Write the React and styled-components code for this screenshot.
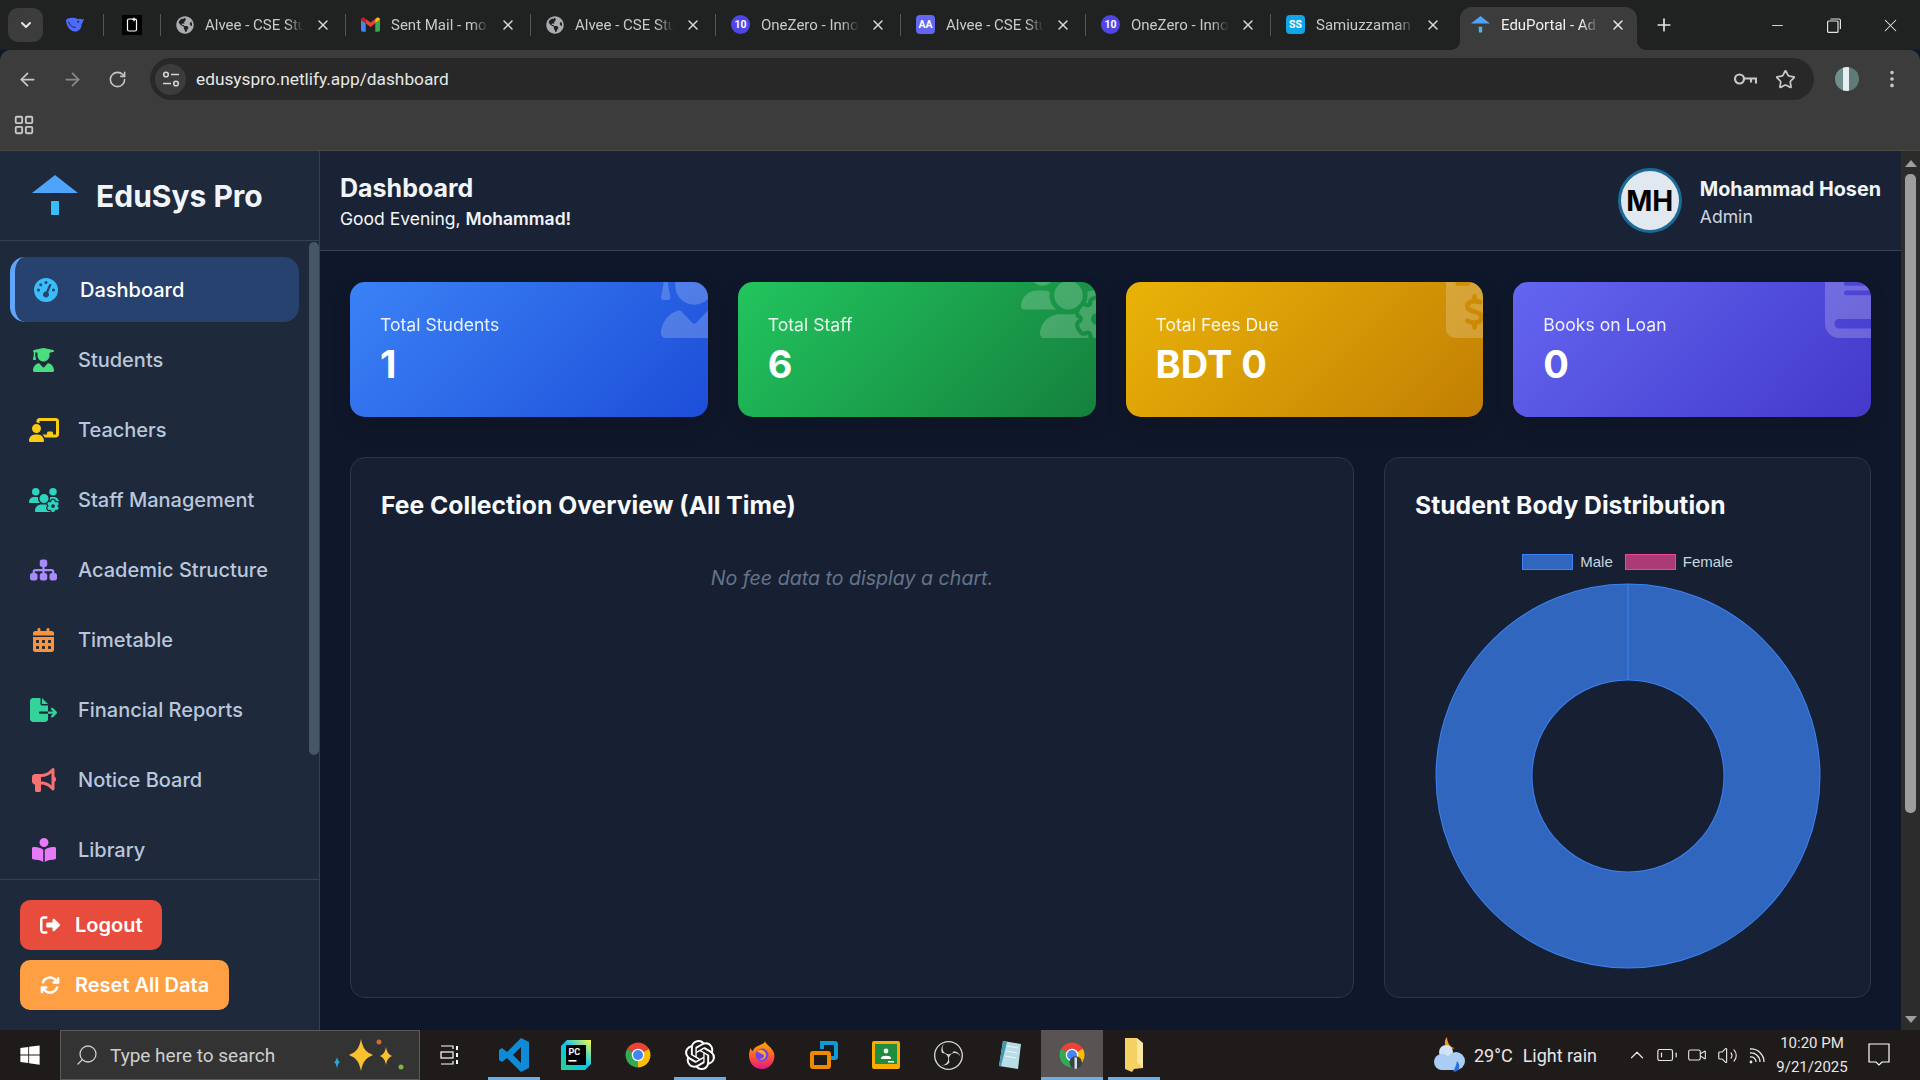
import React from 'react';
import styled, { createGlobalStyle } from 'styled-components';
import { FaGlobeAmericas, FaWindows } from 'react-icons/fa';
import {
  FaUserGraduate, FaUsersGear, FaFileInvoiceDollar, FaBook, FaGaugeHigh, FaChalkboardUser,
  FaSitemap, FaCalendarDays, FaFileExport, FaBullhorn, FaBookOpenReader, FaRightFromBracket, FaArrowsRotate,
} from 'react-icons/fa6';
import { SiOpenai, SiObsstudio } from 'react-icons/si';
import {
  ArrowLeft, ArrowRight, RotateCw, X, Plus, Minus, ChevronDown, ChevronUp, Star,
  EllipsisVertical, LayoutGrid, Search, Video, Volume2, BatteryLow,
} from 'lucide-react';

const GlobalStyle = createGlobalStyle`
  html, body {
    margin: 0;
    width: 1920px;
    height: 1080px;
    overflow: hidden;
    background: #0f172a;
    font-family: Inter, "Liberation Sans", sans-serif;
  }
  * { box-sizing: border-box; }
`;

const Page = styled.div`
  display: flex;
  flex-direction: column;
  width: 1920px;
  height: 1080px;
`;

/* browser chrome */
const TabStrip = styled.div`
  display: flex;
  align-items: flex-end;
  height: 50px;
  flex: none;
  padding-left: 8px;
  background: #202222;
  font-family: Roboto, sans-serif;
`;

const TabListButton = styled.div`
  display: flex;
  align-items: center;
  justify-content: center;
  width: 35px;
  height: 34px;
  margin: 0 4px 8px 0;
  border-radius: 10px;
  background: #3c3c3c;
  color: #e3e3e3;
`;

const PinnedTab = styled.div`
  display: flex;
  align-items: center;
  justify-content: center;
  width: 56px;
  height: 43px;
  padding-bottom: 8px;
`;

const TabDivider = styled.div`
  width: 1px;
  height: 22px;
  margin-bottom: 14px;
  background: #555;
  opacity: ${p => (p.$hidden ? 0 : 1)};
`;

const Tab = styled.div`
  display: flex;
  align-items: center;
  gap: 11px;
  width: 184px;
  height: 43px;
  padding: 0 14px 8px 15px;
  color: #c9c9c9;
  font-size: 15px;
  white-space: nowrap;
`;

const ActiveTab = styled(Tab)`
  position: relative;
  width: 177px;
  margin-left: 4px;
  padding: 0 11px 8px 11px;
  color: #f0f0f0;
  background: #3c3c3c;
  border-radius: 12px 12px 0 0;

  &::before,
  &::after {
    content: '';
    position: absolute;
    bottom: 0;
    width: 10px;
    height: 10px;
  }

  &::before {
    left: -10px;
    background: radial-gradient(circle at 0 0, transparent 10px, #3c3c3c 10.5px);
  }

  &::after {
    right: -10px;
    background: radial-gradient(circle at 100% 0, transparent 10px, #3c3c3c 10.5px);
  }
`;

const TabTitle = styled.span`
  flex: 1;
  overflow: hidden;
  -webkit-mask-image: linear-gradient(90deg, #000 82%, transparent 100%);
  mask-image: linear-gradient(90deg, #000 82%, transparent 100%);
`;

const Favicon = styled.span`
  display: flex;
  align-items: center;
  justify-content: center;
  flex: none;
  width: 19px;
  height: 19px;
  border-radius: ${p => (p.$round ? '50%' : '4px')};
  background: ${p => p.$bg || 'transparent'};
  color: #fff;
  font-size: 10.5px;
  font-weight: 700;
`;

const NewTab = styled.div`
  display: flex;
  align-items: center;
  justify-content: center;
  width: 30px;
  height: 30px;
  margin: 0 0 10px 12px;
  color: #e3e3e3;
`;

const WindowControls = styled.div`
  display: flex;
  align-self: stretch;
  margin-left: auto;
  padding-right: 1px;
`;

const WindowControl = styled.div`
  display: flex;
  align-items: center;
  justify-content: center;
  width: 56.5px;
  color: #e3e3e3;
`;

const Toolbar = styled.div`
  display: flex;
  align-items: center;
  height: 50px;
  flex: none;
  padding: 8px 0 0 5px;
  background: #3c3c3c;
  border-radius: 10px 10px 0 0;
  font-family: Roboto, sans-serif;
`;

const NavButton = styled.div`
  display: flex;
  align-items: center;
  justify-content: center;
  width: 45px;
  color: ${p => (p.$dim ? '#8a8a8a' : '#c7c7c7')};
`;

const AddressBar = styled.div`
  display: flex;
  align-items: center;
  width: 1664px;
  height: 42px;
  margin-left: 10px;
  padding: 0 18px 0 5px;
  border-radius: 21px;
  background: #282828;
  color: #e6e6e6;
  font-size: 17.3px;
`;

const SiteInfo = styled.div`
  display: flex;
  align-items: center;
  justify-content: center;
  width: 31px;
  height: 31px;
  margin-right: 10px;
  border-radius: 50%;
  background: #3c3c3c;
  color: #d4d4d4;
`;

const AddressActions = styled.div`
  display: flex;
  align-items: center;
  gap: 18px;
  margin-left: auto;
  color: #c7c7c7;
`;

const ProfilePic = styled.div`
  width: 24px;
  height: 24px;
  margin-left: 21px;
  border-radius: 50%;
  background: linear-gradient(90deg, #6f8f8e 0 35%, #e8eef0 35% 60%, #5f7a7a 60%);
`;

const MenuDots = styled.div`
  display: flex;
  margin-left: 22px;
  color: #c7c7c7;
`;

const BookmarkBar = styled.div`
  display: flex;
  align-items: center;
  height: 51px;
  flex: none;
  padding-left: 13px;
  background: #3c3c3c;
  border-bottom: 1px solid #4a4a40;
  color: #c7c7c7;
`;

/* app */
const AppShell = styled.div`
  display: flex;
  flex: 1;
  min-height: 0;
`;

const Sidebar = styled.aside`
  display: flex;
  flex-direction: column;
  flex: none;
  width: 320px;
  background: #1e293b;
  border-right: 1px solid #334155;
`;

const Brand = styled.div`
  display: flex;
  align-items: center;
  gap: 18px;
  flex: none;
  height: 90px;
  padding-left: 32px;
  border-bottom: 1px solid #334155;
`;

const BrandName = styled.div`
  color: #f1f5f9;
  font-size: 30px;
  font-weight: 700;
`;

const Nav = styled.nav`
  position: relative;
  display: flex;
  flex-direction: column;
  gap: 5px;
  flex: 1;
  min-height: 0;
  padding: 16px 0 0 10px;
  overflow: hidden;
`;

const NavScrollThumb = styled.div`
  position: absolute;
  top: 1px;
  right: 0;
  width: 10px;
  height: 513px;
  border-radius: 5px;
  background: #475569;
`;

const NavItem = styled.div`
  display: flex;
  align-items: center;
  flex: none;
  gap: 21px;
  width: 289px;
  height: 65px;
  padding-left: ${p => (p.$active ? '17px' : '20px')};
  border-left: ${p => (p.$active ? '5px solid #60a5fa' : '0')};
  border-radius: 15px;
  background: ${p => (p.$active ? '#27426f' : 'transparent')};
  color: ${p => (p.$active ? '#fff' : '#b9c7dc')};
  font-size: 20px;
  font-weight: 500;
`;

const NavIconSlot = styled.span`
  display: flex;
  justify-content: center;
  flex: none;
  width: 27px;
  color: ${p => p.$tint};

  svg {
    flex: none;
    width: ${p => p.$w}px;
    height: 24px;
  }
`;

const SideFooter = styled.div`
  display: flex;
  flex-direction: column;
  align-items: flex-start;
  gap: 10px;
  flex: none;
  padding: 20px;
  border-top: 1px solid #334155;
`;

const ActionButton = styled.div`
  display: flex;
  align-items: center;
  gap: 15px;
  height: 50px;
  padding: 0 20px;
  border-radius: 10px;
  background: ${p => p.$bg};
  color: #fff;
  font-size: 20px;
  font-weight: 600;

  svg {
    width: 20px;
    height: 20px;
  }
`;

const Main = styled.main`
  display: flex;
  flex-direction: column;
  flex: 1;
  min-width: 0;
`;

const Header = styled.header`
  display: flex;
  align-items: center;
  justify-content: space-between;
  flex: none;
  height: 100px;
  padding: 0 20px;
  background: #1a2335;
  border-bottom: 1px solid #334155;
`;

const PageTitle = styled.h1`
  margin: 0 0 2px;
  color: #f1f5f9;
  font-size: 25px;
  line-height: 34px;
  font-weight: 700;
`;

const Greeting = styled.div`
  color: #f1f5f9;
  font-size: 17.5px;
  line-height: 24px;

  b {
    font-weight: 600;
  }
`;

const UserBox = styled.div`
  display: flex;
  align-items: center;
  gap: 18px;
`;

const Avatar = styled.div`
  display: flex;
  align-items: center;
  justify-content: center;
  width: 64px;
  height: 65px;
  border: 3px solid #1a6a96;
  border-radius: 50%;
  background: #e2e8f0;
  color: #000;
  font-size: 28px;
  font-weight: 700;
`;

const UserText = styled.div`
  padding-top: 4px;
`;

const UserName = styled.div`
  color: #f1f5f9;
  font-size: 19.8px;
  line-height: 28px;
  font-weight: 700;
`;

const UserRole = styled.div`
  color: #cbd5e1;
  font-size: 17.6px;
  line-height: 28px;
`;

const Content = styled.div`
  display: flex;
  flex-direction: column;
  gap: 40px;
  flex: 1;
  padding: 31px 30px 0;
`;

const StatGrid = styled.div`
  display: grid;
  grid-template-columns: repeat(4, 1fr);
  gap: 30px;
`;

const StatCard = styled.div`
  position: relative;
  height: 135px;
  padding: 30px;
  overflow: hidden;
  border-radius: 15px;
  background: linear-gradient(135deg, ${p => p.$from}, ${p => p.$to});
  box-shadow: 0 8px 20px rgba(0, 0, 0, 0.12);
  color: #fff;

  > svg {
    position: absolute;
    top: -20px;
    right: -20px;
    width: ${p => p.$iconWidth}px;
    height: 76px;
    color: #fff;
    opacity: 0.2;
  }
`;

const StatLabel = styled.div`
  font-size: 17.6px;
  line-height: 26px;
  opacity: 0.9;
`;

const StatValue = styled.div`
  margin-top: 2px;
  font-size: 38px;
  line-height: 48px;
  font-weight: 700;
`;

const PanelGrid = styled.div`
  display: grid;
  grid-template-columns: 1004fr 487fr;
  gap: 30px;
`;

const Panel = styled.section`
  height: 541px;
  padding: 30px;
  border: 1px solid #2b3648;
  border-radius: 15px;
  background: #162032;
`;

const PanelTitle = styled.h2`
  margin: 0;
  color: #f8fafc;
  font-size: 24.7px;
  line-height: 34px;
  font-weight: 700;
`;

const EmptyNote = styled.p`
  margin: 44px 0 0;
  color: #64748b;
  font-size: 19.6px;
  line-height: 24px;
  font-style: italic;
  text-align: center;
`;

const Legend = styled.div`
  display: flex;
  justify-content: center;
  align-items: center;
  gap: 7px;
  margin-top: 32px;
  color: #cbd5e1;
  font-family: "Liberation Sans", Arial, sans-serif;
  font-size: 15px;
  line-height: 16px;
`;

const LegendSwatch = styled.span`
  width: 51px;
  height: 16px;
  border: 1px solid ${p => p.$edge};
  background: ${p => p.$fill};
`;

const LegendText = styled.span`
  margin-right: ${p => (p.$spaced ? '5px' : '0')};
`;

const DonutChart = styled.svg`
  display: block;
  width: 386px;
  height: 386px;
  margin: 13px auto 0;
`;

const PageScrollbar = styled.div`
  display: flex;
  flex-direction: column;
  align-items: center;
  flex: none;
  width: 19px;
  background: #2c2c2c;
`;

const ScrollArrow = styled.div`
  flex: none;
  width: 0;
  height: 0;
  margin: ${p => (p.$down ? 'auto 0 7px' : '9px 0 0')};
  border-left: 6px solid transparent;
  border-right: 6px solid transparent;
  border-${p => (p.$down ? 'top' : 'bottom')}: 7px solid #9e9e9e;
`;

const ScrollThumb = styled.div`
  flex: none;
  width: 11px;
  height: 639px;
  margin-top: 7px;
  border-radius: 5px;
  background: #9e9e9e;
`;

/* windows taskbar */
const Taskbar = styled.footer`
  display: flex;
  align-items: center;
  flex: none;
  height: 50px;
  background: #1f1b1b;
  color: #e6e6e6;
  font-family: Roboto, sans-serif;
`;

const StartButton = styled.div`
  display: flex;
  align-items: center;
  justify-content: center;
  width: 60px;
  color: #fff;
`;

const SearchBox = styled.div`
  display: flex;
  align-items: center;
  width: 360px;
  height: 50px;
  margin-right: 1px;
  padding: 0 14px;
  border: 1px solid #5a5a5a;
  background: #333;
  color: #cfcfcf;
  font-size: 19px;
`;

const SearchGlass = styled(Search)`
  transform: scaleX(-1);
`;

const SearchLabel = styled.span`
  margin-left: 11px;
`;

const Sparkles = styled.svg`
  width: 76px;
  height: 40px;
  margin-left: auto;
  margin-right: -2px;
`;

const TaskItem = styled.div`
  position: relative;
  display: flex;
  align-items: center;
  justify-content: center;
  width: 62px;
  height: 50px;
  background: ${p => (p.$focused ? '#5a5353' : 'transparent')};

  &::after {
    content: '';
    position: absolute;
    left: ${p => (p.$focused ? '0' : '5px')};
    right: ${p => (p.$focused ? '0' : '5px')};
    bottom: 0;
    height: 3px;
    background: ${p => (p.$running ? '#6aaee8' : 'transparent')};
  }
`;

const TaskViewButton = styled(TaskItem)`
  padding-right: 5px;
`;

const Tray = styled.div`
  display: flex;
  align-items: center;
  margin-left: auto;
  padding-right: 20px;
`;

const Weather = styled.div`
  display: flex;
  align-items: center;
  width: 189px;
  font-size: 18px;
`;

const WeatherTemp = styled.span`
  margin: 0 10px 0 9px;
`;

const TrayIcon = styled.div`
  display: flex;
  align-items: center;
  justify-content: center;
  width: 30px;
  color: #e6e6e6;
`;

const Clock = styled.div`
  width: 76px;
  margin-left: 2px;
  font-size: 15px;
  line-height: 24px;
  text-align: center;
`;

const NotifyButton = styled.div`
  display: flex;
  justify-content: center;
  width: 42px;
  margin-left: 8px;
`;

const BrandMark = ({ size = 46 }) => (
  <svg width={size} height={size * 0.87} viewBox="0 0 46 40">
    <polygon points="23,0 46,18 0,18" fill="#4ea4fa" />
    <rect x="19" y="26" width="8" height="14" rx="1" fill="#38bdf8" />
  </svg>
);

const TuneIcon = () => (
  <svg width="20" height="20" viewBox="0 0 20 20" fill="none" stroke="currentColor" strokeWidth="1.6">
    <circle cx="5" cy="5.5" r="2.3" />
    <path d="M10 5.5h8M2 14.5h8" />
    <circle cx="15" cy="14.5" r="2.3" />
  </svg>
);

const PasswordKeyIcon = () => (
  <svg width="24" height="18" viewBox="0 0 24 18" fill="none" stroke="currentColor" strokeWidth="2.2">
    <circle cx="6.5" cy="9" r="4.5" />
    <path d="M11 8.5h12v5M18 8.5v4" />
  </svg>
);

const RestoreIcon = () => (
  <svg width="14" height="15" viewBox="0 0 14 15" fill="none" stroke="currentColor" strokeWidth="1.2">
    <rect x="0.6" y="3" width="10.4" height="11.4" rx="1" />
    <path d="M3.5 1h8.5a1.4 1.4 0 0 1 1.4 1.4V11" />
  </svg>
);

const TaskViewIcon = () => (
  <svg width="20" height="20" viewBox="0 0 20 20" fill="none" stroke="#fff" strokeWidth="1.2">
    <path d="M1 1h12v3M1 19h12v-3" />
    <rect x="1" y="7" width="12" height="6" />
    <path d="M17 1v4M17 8v4M17 15v4" strokeWidth="2" />
  </svg>
);

const CornerWifiIcon = () => (
  <svg width="22" height="22" viewBox="0 0 22 22" fill="none" stroke="#e6e6e6" strokeWidth="1.3">
    <circle cx="5" cy="18" r="1.4" fill="#e6e6e6" stroke="none" />
    <path d="M4 13a5 5 0 0 1 6 5M4 9a9 9 0 0 1 10 9M4 5a13 13 0 0 1 14 13" />
  </svg>
);

const NotifyIcon = () => (
  <svg width="22" height="24" viewBox="0 0 22 24" fill="none" stroke="#fff" strokeWidth="1.2">
    <path d="M1 1h20v18h-7l-3 3-3-3H1z" />
  </svg>
);

const VsCodeIcon = () => (
  <svg width="30" height="34" viewBox="0 0 30 34">
    <path d="M22 0l8 4v26l-8 4L8 20l-5 4-3-2v-10l3-2 5 4zM22 9l-8 8 8 8z" fill="#0f8ad6" />
  </svg>
);

const ChromeLogo = ({ size = 30, badge }) => (
  <svg width={size} height={size} viewBox="0 0 24 24">
    <path d="M12 12L3.34 7A10 10 0 0 1 20.66 7Z" fill="#ea4335" />
    <path d="M12 12L20.66 7A10 10 0 0 1 12 22Z" fill="#fbbc04" />
    <path d="M12 12L12 22A10 10 0 0 1 3.34 7Z" fill="#34a853" />
    <circle cx="12" cy="12" r="5" fill="#fff" />
    <circle cx="12" cy="12" r="4" fill="#4285f4" />
    {badge && <circle cx="15" cy="18" r="5" fill="#3b4245" />}
    {badge && <rect x="14" y="14" width="2" height="9" fill="#d5dee0" />}
  </svg>
);

const GmailIcon = () => (
  <svg width="19" height="15" viewBox="0 0 24 18">
    <path d="M0 3l6 4.5V18H2a2 2 0 0 1-2-2z" fill="#4285f4" />
    <path d="M24 3l-6 4.5V18h4a2 2 0 0 0 2-2z" fill="#34a853" />
    <path d="M6 7.5V2l6 4.5L18 2v5.5L12 12z" fill="#ea4335" />
    <path d="M0 3c0-2.5 2.8-3.6 4.5-2.2L6 2v5.5z" fill="#c5221f" />
    <path d="M24 3c0-2.5-2.8-3.6-4.5-2.2L18 2v5.5z" fill="#fbbc04" />
  </svg>
);

const WhaleIcon = () => (
  <svg width="20" height="18" viewBox="0 0 24 22">
    <path d="M23 3c-1 1-2 1-3 1-1-1-3-1-4 0C10 1 3 2 1 5c0 6 4 14 11 14 5 0 8-4 8-9 1-1 2-3 3-7z" fill="#4d6bfe" />
    <circle cx="16" cy="7" r="1.2" fill="#202222" />
    <path d="M4 7c2 5 5 7 9 7" stroke="#202222" strokeWidth="1.2" fill="none" />
  </svg>
);

const NotebookIcon = () => (
  <svg width="20" height="20" viewBox="0 0 20 20">
    <rect width="20" height="20" fill="#000" />
    <rect x="5.5" y="4" width="9" height="12" rx="1.5" fill="none" stroke="#fff" strokeWidth="1.2" />
    <path d="M12 2l.7 1.8L14.5 4.5l-1.8.7L12 7l-.7-1.8-1.8-.7 1.8-.7z" fill="#fff" />
  </svg>
);

const PyCharmIcon = () => (
  <svg width="30" height="30" viewBox="0 0 30 30">
    <defs>
      <linearGradient id="pc" x1="0" y1="1" x2="1" y2="0">
        <stop offset="0" stopColor="#21d789" />
        <stop offset="0.5" stopColor="#07c3f2" />
        <stop offset="1" stopColor="#fcf84a" />
      </linearGradient>
    </defs>
    <path d="M6 0h24v24l-6 6H0V6z" fill="url(#pc)" />
    <rect x="5" y="5" width="20" height="20" fill="#000" />
    <text x="7.5" y="14.5" fill="#fff" fontSize="9" fontWeight="700" fontFamily="Roboto, sans-serif">PC</text>
    <rect x="7.5" y="20" width="8" height="1.6" fill="#fff" />
  </svg>
);

const FirefoxIcon = () => (
  <svg width="30" height="32" viewBox="0 0 30 30">
    <defs>
      <linearGradient id="ff" x1="0.5" y1="0" x2="0.5" y2="1">
        <stop offset="0" stopColor="#ffb000" />
        <stop offset="0.55" stopColor="#ff5a2c" />
        <stop offset="1" stopColor="#e31587" />
      </linearGradient>
    </defs>
    <path d="M18 1c1 4 7 6 9 12 2 8-4 16-12 16S2 23 2 15c0-3 1-6 2-7 0 2 1 3 2 3 1-4 5-5 7-6 3-1 5-2 5-4z" fill="url(#ff)" />
    <circle cx="15" cy="15" r="6.5" fill="#7542e5" />
    <path d="M10 11c4-3 9 0 9 4s-4 6-7 4c3 0 5-1 5-3s-4-2-7-5z" fill="#ffa436" />
  </svg>
);

const WindowsSyncIcon = () => (
  <svg width="30" height="32" viewBox="0 0 30 30">
    <path d="M11 1h15a3 3 0 0 1 3 3v13a3 3 0 0 1-3 3h-4v-4h3V5H15v4h-4z" fill="#0f9ad6" />
    <path d="M4 11h15a3 3 0 0 1 3 3v12a3 3 0 0 1-3 3H4a3 3 0 0 1-3-3V14a3 3 0 0 1 3-3zm1 4v10h13V15z" fill="#ef8a00" />
  </svg>
);

const ClassroomIcon = () => (
  <svg width="28" height="28" viewBox="0 0 28 28">
    <rect width="28" height="28" rx="2" fill="#f9ab00" />
    <rect x="3" y="3" width="22" height="20" fill="#1e8e3e" />
    <circle cx="14" cy="10" r="2.4" fill="#fff" />
    <path d="M9 17c0-3 10-3 10 0v1H9z" fill="#fff" />
    <rect x="16" y="20" width="6" height="1.5" fill="#fff" />
  </svg>
);

const NotepadIcon = () => (
  <svg width="26" height="32" viewBox="0 0 26 32">
    <path d="M6 2l18 3-3 25L2 27z" fill="#b8dde6" />
    <path d="M6 2l4 1-6 24-2 0z" fill="#3f99ab" />
    <path d="M10 7l11 2M9 12l11 2M8 17l11 2" stroke="#e8f6fa" strokeWidth="1.2" />
  </svg>
);

const FolderIcon = () => (
  <svg width="20" height="34" viewBox="0 0 20 34">
    <path d="M1 0h12v5h6v25l-9 1-2 3-7-3z" fill="#f5d063" />
    <path d="M13 0v24l6 6V5z" fill="#fbe7a1" />
  </svg>
);

const WeatherIcon = () => (
  <svg width="32" height="36" viewBox="0 0 32 36">
    <path d="M14 0c-3 3-3 9 1 11 2 1 5 1 7 0-5 0-8-6-8-11z" fill="#f59a23" />
    <circle cx="13" cy="15" r="7" fill="#cfe3fa" />
    <circle cx="9" cy="25" r="8" fill="#a9cdf5" />
    <circle cx="23" cy="24" r="9" fill="#a9cdf5" />
    <rect x="6" y="24" width="20" height="9" rx="4" fill="#a9cdf5" />
    <path d="M24 24c3 4 3 7 1 9s-4 2-5 1c2-2 3-6 4-10z" fill="#2a6fdb" />
  </svg>
);

const tabs = [
  { title: 'Alvee - CSE Stu', icon: <FaGlobeAmericas size={18} color="#a9adb1" /> },
  { title: 'Sent Mail - mo', icon: <GmailIcon /> },
  { title: 'Alvee - CSE Stu', icon: <FaGlobeAmericas size={18} color="#a9adb1" /> },
  { title: 'OneZero - Inno', icon: <Favicon $round $bg="#4f46e5">10</Favicon> },
  { title: 'Alvee - CSE Stu', icon: <Favicon $bg="#6366f1">AA</Favicon> },
  { title: 'OneZero - Inno', icon: <Favicon $round $bg="#4f46e5">10</Favicon> },
  { title: 'Samiuzzaman', icon: <Favicon $bg="#0ea5e9">SS</Favicon> },
];

const navItems = [
  { label: 'Students', icon: FaUserGraduate, tint: '#4ade80', w: 21 },
  { label: 'Teachers', icon: FaChalkboardUser, tint: '#facc15', w: 30 },
  { label: 'Staff Management', icon: FaUsersGear, tint: '#2dd4bf', w: 30 },
  { label: 'Academic Structure', icon: FaSitemap, tint: '#a78bfa', w: 27 },
  { label: 'Timetable', icon: FaCalendarDays, tint: '#fb923c', w: 21 },
  { label: 'Financial Reports', icon: FaFileExport, tint: '#34d399', w: 27 },
  { label: 'Notice Board', icon: FaBullhorn, tint: '#f87171', w: 24 },
  { label: 'Library', icon: FaBookOpenReader, tint: '#e879f9', w: 24 },
];

const stats = [
  { label: 'Total Students', value: '1', icon: FaUserGraduate, from: '#3b82f6', to: '#1d4ed8', iconWidth: 66.5 },
  { label: 'Total Staff', value: '6', icon: FaUsersGear, from: '#22c55e', to: '#15803d', iconWidth: 95 },
  { label: 'Total Fees Due', value: 'BDT 0', icon: FaFileInvoiceDollar, from: '#eab308', to: '#c27f04', iconWidth: 57 },
  { label: 'Books on Loan', value: '0', icon: FaBook, from: '#6366f1', to: '#4338ca', iconWidth: 66.5 },
];

const App = () => (
  <Page>
    <GlobalStyle />
    <TabStrip>
      <TabListButton><ChevronDown size={16} strokeWidth={3} /></TabListButton>
      <PinnedTab><WhaleIcon /></PinnedTab>
      <TabDivider />
      <PinnedTab><NotebookIcon /></PinnedTab>
      <TabDivider />
      {tabs.map((tab, i) => (
        <React.Fragment key={i}>
          <Tab>
            {tab.icon}
            <TabTitle>{tab.title}</TabTitle>
            <X size={16} color="#d8d8d8" strokeWidth={2.2} />
          </Tab>
          <TabDivider $hidden={i === tabs.length - 1} />
        </React.Fragment>
      ))}
      <ActiveTab>
        <BrandMark size={19} />
        <TabTitle>EduPortal - Ad</TabTitle>
        <X size={16} color="#e8e8e8" strokeWidth={2.2} />
      </ActiveTab>
      <NewTab><Plus size={20} strokeWidth={2} /></NewTab>
      <WindowControls>
        <WindowControl><Minus size={17} strokeWidth={1.3} /></WindowControl>
        <WindowControl><RestoreIcon /></WindowControl>
        <WindowControl><X size={21} strokeWidth={1.2} /></WindowControl>
      </WindowControls>
    </TabStrip>

    <Toolbar>
      <NavButton><ArrowLeft size={21} /></NavButton>
      <NavButton $dim><ArrowRight size={21} /></NavButton>
      <NavButton><RotateCw size={19} /></NavButton>
      <AddressBar>
        <SiteInfo><TuneIcon /></SiteInfo>
        edusyspro.netlify.app/dashboard
        <AddressActions>
          <PasswordKeyIcon />
          <Star size={21} />
        </AddressActions>
      </AddressBar>
      <ProfilePic />
      <MenuDots><EllipsisVertical size={22} /></MenuDots>
    </Toolbar>

    <BookmarkBar><LayoutGrid size={22} /></BookmarkBar>

    <AppShell>
      <Sidebar>
        <Brand>
          <BrandMark />
          <BrandName>EduSys Pro</BrandName>
        </Brand>
        <Nav>
          <NavItem $active>
            <NavIconSlot $tint="#38bdf8" $w={24}><FaGaugeHigh /></NavIconSlot>
            Dashboard
          </NavItem>
          {navItems.map(({ label, icon: Icon, tint, w }) => (
            <NavItem key={label}>
              <NavIconSlot $tint={tint} $w={w}><Icon /></NavIconSlot>
              {label}
            </NavItem>
          ))}
          <NavScrollThumb />
        </Nav>
        <SideFooter>
          <ActionButton $bg="#e74c3c"><FaRightFromBracket />Logout</ActionButton>
          <ActionButton $bg="#ff9f43"><FaArrowsRotate />Reset All Data</ActionButton>
        </SideFooter>
      </Sidebar>

      <Main>
        <Header>
          <div>
            <PageTitle>Dashboard</PageTitle>
            <Greeting>Good Evening, <b>Mohammad!</b></Greeting>
          </div>
          <UserBox>
            <Avatar>MH</Avatar>
            <UserText>
              <UserName>Mohammad Hosen</UserName>
              <UserRole>Admin</UserRole>
            </UserText>
          </UserBox>
        </Header>
        <Content>
          <StatGrid>
            {stats.map(({ label, value, icon: Icon, from, to, iconWidth }) => (
              <StatCard key={label} $from={from} $to={to} $iconWidth={iconWidth}>
                <StatLabel>{label}</StatLabel>
                <StatValue>{value}</StatValue>
                <Icon />
              </StatCard>
            ))}
          </StatGrid>
          <PanelGrid>
            <Panel>
              <PanelTitle>Fee Collection Overview (All Time)</PanelTitle>
              <EmptyNote>No fee data to display a chart.</EmptyNote>
            </Panel>
            <Panel>
              <PanelTitle>Student Body Distribution</PanelTitle>
              <Legend>
                <LegendSwatch $fill="#3066bd" $edge="#3b82f6" />
                <LegendText $spaced>Male</LegendText>
                <LegendSwatch $fill="#ab3a78" $edge="#ec4899" />
                <LegendText>Female</LegendText>
              </Legend>
              <DonutChart viewBox="0 0 386 386">
                <circle cx="193" cy="193" r="144" fill="none" stroke="#3b82f6" strokeWidth="97" />
                <circle cx="193" cy="193" r="144" fill="none" stroke="#3066bd" strokeWidth="95" />
                <line x1="193" y1="1" x2="193" y2="97" stroke="#3b82f6" strokeWidth="1" />
              </DonutChart>
            </Panel>
          </PanelGrid>
        </Content>
      </Main>

      <PageScrollbar>
        <ScrollArrow />
        <ScrollThumb />
        <ScrollArrow $down />
      </PageScrollbar>
    </AppShell>

    <Taskbar>
      <StartButton><FaWindows size={22} /></StartButton>
      <SearchBox>
        <SearchGlass size={24} strokeWidth={1.3} />
        <SearchLabel>Type here to search</SearchLabel>
        <Sparkles viewBox="0 0 76 40">
          <path d="M30 4c2 10 5 13 12 16-7 3-10 6-12 16-2-10-5-13-12-16 7-3 10-6 12-16z" fill="#fbc02d" />
          <path d="M55 12c1 5 2 7 6 9-4 2-5 4-6 9-1-5-2-7-6-9 4-2 5-4 6-9z" fill="#fbc02d" />
          <path d="M6 22c1 3 1 4 3 5-2 1-2 3-3 6-1-3-1-5-3-6 2-1 2-2 3-5z" fill="#29a8e0" />
          <circle cx="48" cy="7" r="2.5" fill="#d9692b" />
          <circle cx="70" cy="32" r="2.5" fill="#7cb342" />
        </Sparkles>
      </SearchBox>
      <TaskViewButton><TaskViewIcon /></TaskViewButton>
      <TaskItem $running><VsCodeIcon /></TaskItem>
      <TaskItem><PyCharmIcon /></TaskItem>
      <TaskItem><ChromeLogo /></TaskItem>
      <TaskItem $running><SiOpenai size={30} color="#fff" /></TaskItem>
      <TaskItem><FirefoxIcon /></TaskItem>
      <TaskItem><WindowsSyncIcon /></TaskItem>
      <TaskItem><ClassroomIcon /></TaskItem>
      <TaskItem><SiObsstudio size={29} color="#d5d5d5" /></TaskItem>
      <TaskItem><NotepadIcon /></TaskItem>
      <TaskItem $focused $running><ChromeLogo badge /></TaskItem>
      <TaskItem $running><FolderIcon /></TaskItem>
      <Tray>
        <Weather>
          <WeatherIcon />
          <WeatherTemp>29°C</WeatherTemp>
          Light rain
        </Weather>
        <TrayIcon><ChevronUp size={22} strokeWidth={1.3} /></TrayIcon>
        <TrayIcon><BatteryLow size={22} strokeWidth={1.3} /></TrayIcon>
        <TrayIcon><Video size={20} strokeWidth={1.3} /></TrayIcon>
        <TrayIcon><Volume2 size={21} strokeWidth={1.3} /></TrayIcon>
        <TrayIcon><CornerWifiIcon /></TrayIcon>
        <Clock>10:20 PM<br />9/21/2025</Clock>
        <NotifyButton><NotifyIcon /></NotifyButton>
      </Tray>
    </Taskbar>
  </Page>
);

export default App;
